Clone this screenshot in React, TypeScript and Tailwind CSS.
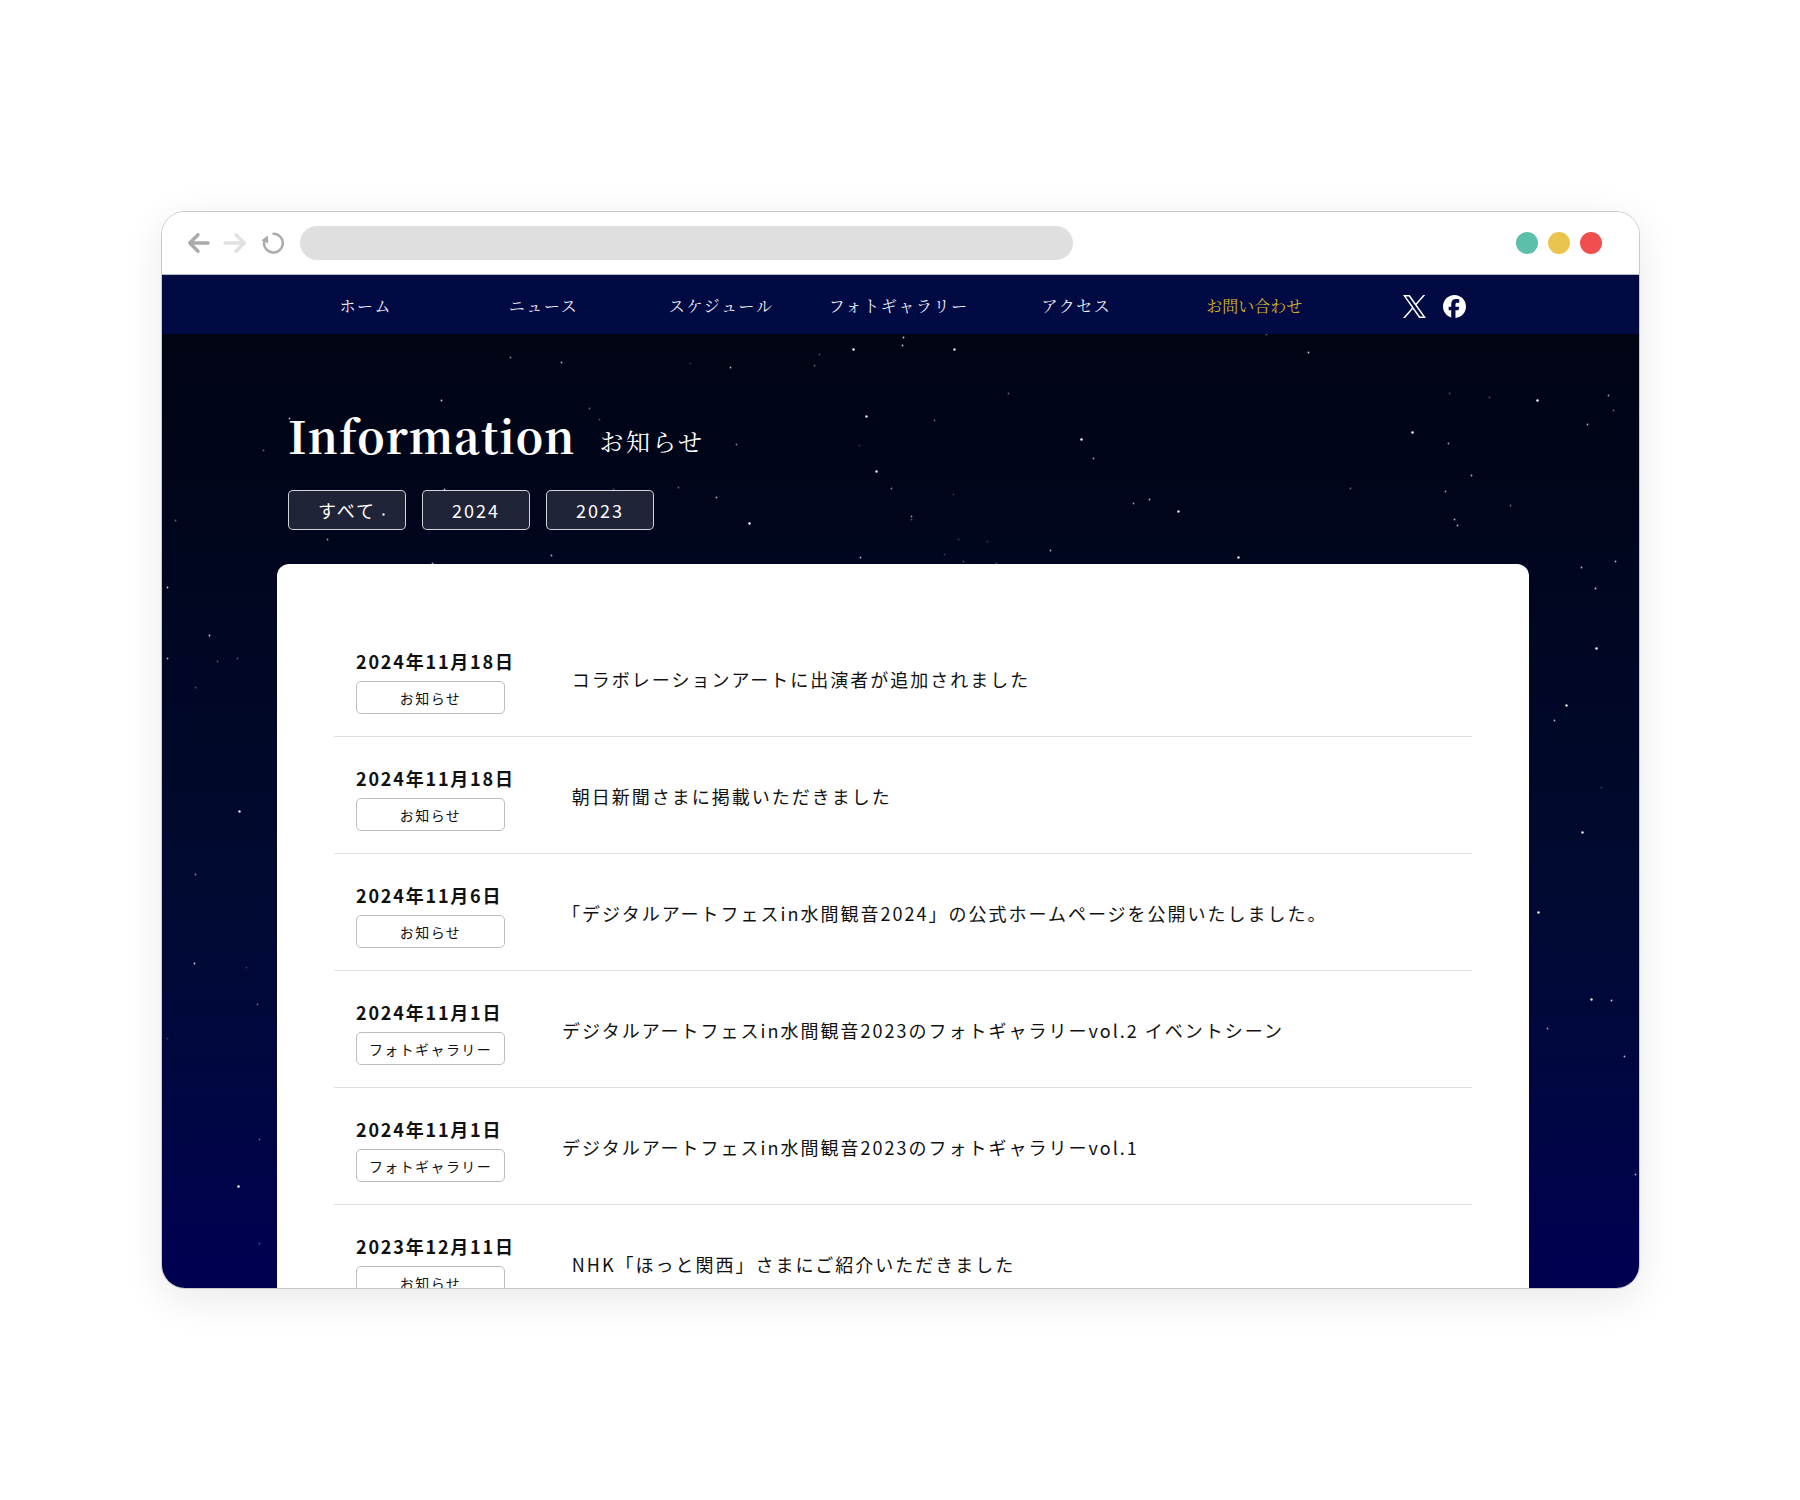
import clsx from 'clsx';

const navItems = [
  { label: 'ホーム' },
  { label: 'ニュース' },
  { label: 'スケジュール' },
  { label: 'フォトギャラリー' },
  { label: 'アクセス' },
  { label: 'お問い合わせ', accent: true },
];

const filters = ['すべて', '2024', '2023'];

const posts = [
  { date: '2024年11月18日', tag: 'お知らせ', title: 'コラボレーションアートに出演者が追加されました' },
  { date: '2024年11月18日', tag: 'お知らせ', title: '朝日新聞さまに掲載いただきました' },
  { date: '2024年11月6日', tag: 'お知らせ', title: '「デジタルアートフェスin水間観音2024」の公式ホームページを公開いたしました。' },
  { date: '2024年11月1日', tag: 'フォトギャラリー', title: 'デジタルアートフェスin水間観音2023のフォトギャラリーvol.2 イベントシーン' },
  { date: '2024年11月1日', tag: 'フォトギャラリー', title: 'デジタルアートフェスin水間観音2023のフォトギャラリーvol.1' },
  { date: '2023年12月11日', tag: 'お知らせ', title: 'NHK「ほっと関西」さまにご紹介いただきました' },
];

// x, y, brightness
const stars: [number, number, number][] = [
  [349, 24, 0.5], [400, 29, 0.7], [280, 67, 0.8], [428, 75, 0.4], [438, 86, 0.3], [128, 85, 0.7],
  [102, 117, 0.4], [283, 156, 0.7], [452, 156, 0.3], [222, 181, 0.9], [166, 206, 0.6], [14, 187, 0.4],
  [742, 4, 0.8], [741, 12, 0.8], [692, 16, 1], [793, 16, 0.9], [658, 21, 0.3], [653, 32, 0.4],
  [569, 34, 0.7], [529, 30, 0.2], [847, 60, 0.4], [705, 83, 0.9], [773, 87, 0.4], [575, 111, 0.5],
  [698, 112, 0.2], [920, 106, 1], [932, 125, 0.6], [715, 138, 0.9], [730, 155, 0.5], [517, 154, 0.4],
  [555, 164, 0.7], [792, 161, 0.2], [972, 170, 0.6], [988, 166, 0.7], [588, 190, 1], [750, 183, 0.6],
  [750, 186, 0.3], [797, 206, 0.2], [826, 208, 0.2], [889, 217, 0.7], [699, 224, 0.7], [783, 221, 0.2],
  [802, 228, 0.3], [835, 230, 0.3], [1105, 1, 0.4], [1147, 19, 0.8], [1288, 60, 0.3], [1328, 64, 0.3],
  [1376, 67, 1], [1447, 62, 0.6], [1452, 77, 0.4], [1251, 99, 1], [1426, 91, 0.7], [1287, 110, 0.6],
  [1310, 142, 0.7], [1189, 155, 0.4], [1284, 158, 0.6], [1349, 172, 0.4], [1293, 186, 0.7], [1296, 192, 0.7],
  [1017, 178, 0.9], [1077, 224, 0.9], [1420, 234, 0.7], [1454, 228, 0.7], [390, 222, 0.7], [271, 230, 0.7],
  [6, 254, 0.8], [48, 302, 0.8], [6, 325, 0.7], [76, 325, 0.3], [56, 328, 0.3], [34, 354, 0.3],
  [78, 478, 0.9], [34, 541, 0.5], [33, 630, 0.8], [85, 634, 0.2], [96, 671, 0.4], [6, 705, 0.2],
  [98, 806, 0.4], [77, 853, 1], [98, 910, 0.3], [1434, 255, 0.8], [1435, 315, 1], [1405, 372, 0.9],
  [1393, 387, 0.7], [1440, 454, 0.2], [1421, 499, 0.9], [1377, 579, 1], [1430, 666, 0.9], [1450, 667, 0.8],
  [1386, 695, 0.6], [1463, 723, 0.7], [1474, 841, 0.7],
];

function StarField() {
  return (
    <svg aria-hidden="true" className="pointer-events-none absolute top-0 left-0 h-[955px] w-[1478px]" viewBox="1 1 1478 955">
      {stars.map(([x, y, light], i) => (
        <circle key={i} cx={x + 0.5} cy={y + 0.5} r={light > 0.8 ? 1.2 : 0.9} fill="#fff" opacity={light} />
      ))}
    </svg>
  );
}

function BrowserBar() {
  return (
    <div className="flex h-[63px] items-center border-b border-[#b9bcc6] bg-white pr-[37px] pl-6">
      <div className="flex items-center gap-[13px]">
        <button type="button" aria-label="戻る">
          <svg className="size-6" viewBox="0 0 24 24" fill="none" stroke="#ababab" strokeWidth="3.4" strokeLinecap="round" strokeLinejoin="round">
            <path d="M12 3.7 3.7 12l8.3 8.3M4 12h18" />
          </svg>
        </button>
        <button type="button" aria-label="進む">
          <svg className="size-6" viewBox="0 0 24 24" fill="none" stroke="#e1e1e1" strokeWidth="3.4" strokeLinecap="round" strokeLinejoin="round">
            <path d="M13 3.7l8.3 8.3-8.3 8.3M21 12H2" />
          </svg>
        </button>
        <button type="button" aria-label="再読み込み">
          <svg className="size-6" viewBox="0 0 24 24" fill="none">
            <path d="M13.5 2.8a9.4 9.4 0 1 1-9.4 8.2" stroke="#ababab" strokeWidth="2.5" strokeLinecap="round" />
            <path d="M1.4 9.2 8 4.6l.2 7.8z" fill="#ababab" />
          </svg>
        </button>
      </div>
      <input
        type="text"
        aria-label="アドレス"
        className="ml-4 h-[34px] w-[773px] rounded-full bg-[#dfdfdf] px-5 text-sm text-gray-700 outline-none"
      />
      <div className="ml-auto flex gap-[10px]">
        <span className="size-[22px] rounded-full bg-[#5bbfa9]" />
        <span className="size-[22px] rounded-full bg-[#e9c54f]" />
        <span className="size-[22px] rounded-full bg-[#f04f50]" />
      </div>
    </div>
  );
}

function SiteHeader() {
  return (
    <header className="relative flex h-[59px] items-center bg-[#010a43] pt-[3px] pr-[110px] pl-[115px] font-['Noto_Serif_CJK_JP','Noto_Serif_JP','Noto_Sans_CJK_JP',serif] text-base">
      <nav className="grid flex-1 grid-cols-6">
        {navItems.map((item) => (
          <a
            key={item.label}
            href="#"
            className={clsx('text-center whitespace-nowrap', item.accent ? 'text-[#d6b02f]' : 'tracking-widest text-[#eef0fb]')}
          >
            {item.label}
          </a>
        ))}
      </nav>
      <div className="mr-[63px] ml-[60px] flex gap-[17px] text-white">
        <a href="#" aria-label="X">
          <svg className="size-[23px]" viewBox="0 0 24 24" fill="currentColor">
            <path d="M14.258 10.152 23.176 0h-2.113l-7.747 8.813L7.133 0H0l9.352 13.328L0 23.973h2.113l8.176-9.309 6.531 9.309h7.133zm-2.895 3.293-.949-1.328L2.875 1.56h3.246l6.086 8.523.945 1.328 7.91 11.078h-3.246z" />
          </svg>
        </a>
        <a href="#" aria-label="Facebook">
          <svg className="size-[23px]" viewBox="0 0 24 24" fill="currentColor">
            <path d="M24 12C24 5.373 18.627 0 12 0S0 5.373 0 12c0 5.3 3.5 9.8 8.6 11.4V16H5.900v-3.800h2.700V9.600c0-3.300 1.700-5.300 5.100-5.300 1.300 0 2.600.2 3.300.4v3.300h-2c-1.500 0-2 .7-2 1.900v2.300h3.900l-.7 3.800h-3.200V24C19.200 23.500 24 18.300 24 12z" />
          </svg>
        </a>
      </div>
    </header>
  );
}

export default function App() {
  return (
    <div className="bg-white pt-[211px] pr-[160px] pb-[211px] pl-[161px] font-['Noto_Sans_CJK_JP',sans-serif]">
      <div className="h-[1078px] overflow-hidden rounded-[24px] border border-[#c9c9cd] shadow-[0_10px_40px_rgba(0,0,0,0.09)]">
        <BrowserBar />
        <SiteHeader />

        <main className="relative bg-linear-to-b from-[#000413] via-[#010a30] via-55% to-[#000051] to-95% pr-[110px] pl-[115px]">
          <StarField />

          <div className="relative px-[11px] pt-[63px] text-white">
            <div className="flex items-center gap-6 font-['Noto_Serif_CJK_JP','Noto_Serif_JP','Liberation_Serif','Noto_Sans_CJK_JP',serif]">
              <h1 className="text-[44px] leading-[76px] font-bold tracking-wide">Information</h1>
              <p className="pt-3 text-2xl tracking-widest">お知らせ</p>
            </div>
            <div className="mt-[17px] flex gap-4">
              {filters.map((label) => (
                <button
                  key={label}
                  type="button"
                  className="h-10 rounded-[5px] border border-white/80 bg-white/12 px-[29px] text-lg leading-none tracking-[2px]"
                >
                  {label}
                </button>
              ))}
            </div>
          </div>

          <section className="relative mt-[34px] rounded-t-xl bg-white px-[57px] pt-14">
            <ul>
              {posts.map((post, i) => (
                <li key={i} className="border-b border-[#e0e0e0] text-[#111]">
                  <a href="#" className="flex items-center gap-[57px] pt-7 pb-[22px] pl-[22px]">
                    <div>
                      <time className="block text-lg leading-[27px] font-bold tracking-widest">{post.date}</time>
                      <span className="mt-1.5 flex h-[33px] w-[149px] items-center justify-center rounded-[5px] border border-[#bdbdbd] text-sm tracking-widest">
                        {post.tag}
                      </span>
                    </div>
                    <p className="pb-1 text-lg leading-[27px] tracking-[2px]">{post.title}</p>
                  </a>
                </li>
              ))}
            </ul>
          </section>
        </main>
      </div>
    </div>
  );
}
